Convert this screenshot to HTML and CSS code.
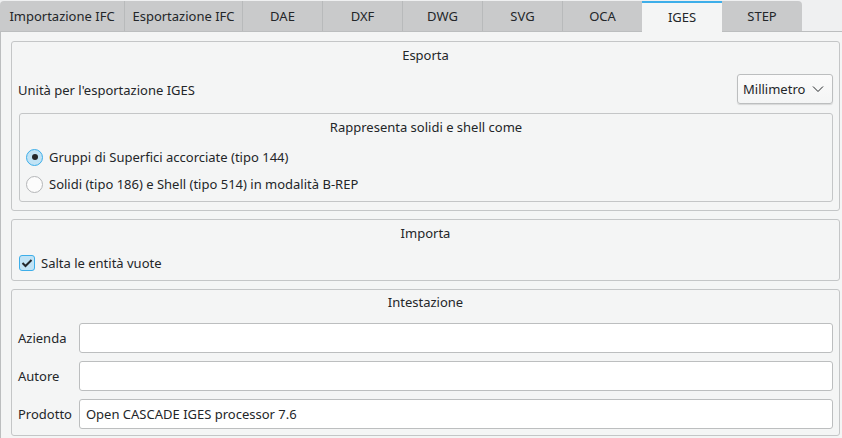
FILE: index.html
```html
<!DOCTYPE html>
<html lang="it">
<head>
<meta charset="utf-8">
<title>IGES</title>
<link rel="stylesheet" href="styles.css">
</head>
<body>
<div class="tabs">
  <div class="tab first w124">Importazione IFC</div>
  <div class="tab w118">Esportazione IFC</div>
  <div class="tab">DAE</div>
  <div class="tab">DXF</div>
  <div class="tab">DWG</div>
  <div class="tab">SVG</div>
  <div class="tab">OCA</div>
  <div class="tab active">IGES</div>
  <div class="tab last">STEP</div>
</div>
<div class="pane">
  <section class="group g-export">
    <div class="title">Esporta</div>
    <div class="unit-row">
      <span>Unità per l'esportazione IGES</span>
      <div class="combo"><span>Millimetro</span>
        <svg class="chev" width="12" height="8" viewBox="0 0 12 8"><polyline points="1,1.5 6,6.5 11,1.5" fill="none" stroke="#232629" stroke-width="1"/></svg>
      </div>
    </div>
    <section class="group inner">
      <div class="title">Rappresenta solidi e shell come</div>
      <div class="opt first-opt"><span class="radio checked"><span class="dot"></span></span>Gruppi di Superfici accorciate (tipo 144)</div>
      <div class="opt"><span class="radio"></span>Solidi (tipo 186) e Shell (tipo 514) in modalità B-REP</div>
    </section>
  </section>
  <section class="group g-import">
    <div class="title">Importa</div>
    <div class="opt check-row"><span class="check"><svg width="12" height="10" viewBox="0 0 12 10"><polyline points="1.5,5 4.5,8 10.5,2" fill="none" stroke="#232629" stroke-width="2"/></svg></span>Salta le entità vuote</div>
  </section>
  <section class="group g-header">
    <div class="title">Intestazione</div>
    <div class="form">
      <label>Azienda</label><div class="input"></div>
      <label>Autore</label><div class="input"></div>
      <label>Prodotto</label><div class="input">Open CASCADE IGES processor 7.6</div>
    </div>
  </section>
</div>
</body>
</html>
```
FILE: styles.css
```css
* { box-sizing: border-box; }
html, body { margin: 0; padding: 0; }
body {
  width: 842px;
  height: 438px;
  overflow: hidden;
  background: #eff0f1;
  font-family: "Noto Sans", "DejaVu Sans", sans-serif;
  font-size: 13px;
  color: #232629;
}
.tabs {
  display: flex;
  height: 31px;
  padding-top: 1px;
  position: relative;
  z-index: 1;
}
.tab {
  width: 80px;
  height: 30px;
  background: #c9cacb;
  border-left: 1px solid #b8babb;
  display: flex;
  align-items: center;
  justify-content: center;
  padding-bottom: 1px;
}
.tab.first { border-left: none; border-top-left-radius: 4px; }
.tab.last { border-top-right-radius: 4px; }
.w124 { width: 124px; }
.w118 { width: 118px; }
.tab.active {
  background: #f4f5f5;
  border-top: 2px solid #3daee9;
  border-left: none;
  height: 31px;
  padding-top: 0;
  padding-bottom: 2px;
}
.tab.active + .tab { border-left: none; }
.pane {
  height: 407px;
  background: #f4f5f5;
  border-top: 1px solid #bcbebf;
  border-left: 1px solid #bcbebf;
  padding: 9px 2px 0 10px;
  display: flex;
  flex-direction: column;
  gap: 8px;
}
.group {
  border: 1px solid #c4c6c7;
  border-radius: 3px;
  background: #f4f5f5;
  padding: 4px 6px 7px 6px;
}
.g-export { padding-bottom: 8px; }
.title {
  text-align: center;
  line-height: 18px;
  height: 18px;
}
.unit-row {
  display: flex;
  align-items: center;
  justify-content: space-between;
  margin-top: 10px;
  padding-left: 0;
  padding-right: 0;
}
.unit-row > span { position: relative; top: 1px; }
.combo {
  width: 96px;
  height: 30px;
  border: 1px solid #bcbebf;
  border-radius: 3px;
  background: linear-gradient(#fbfbfb, #f4f5f5);
  box-shadow: 0 1px 1px rgba(0,0,0,0.12);
  display: flex;
  align-items: center;
  justify-content: space-between;
  padding: 0 8px 0 5px;
}
.chev { display: block; }
.group.inner {
  margin-top: 9px;
  margin-left: 1px;
  padding: 4px 6px 5px 6px;
}
.opt {
  height: 24px;
  display: flex;
  align-items: center;
}
.first-opt { margin-top: 9px; }
.opt + .opt { margin-top: 3px; }
.radio {
  width: 17px;
  height: 17px;
  border-radius: 50%;
  border: 1px solid #b4b6b8;
  background: #fcfcfc;
  margin-right: 6px;
  display: flex;
  align-items: center;
  justify-content: center;
}
.radio.checked {
  border-color: #3daee9;
  background: #c1e3f5;
}
.dot {
  width: 6px;
  height: 6px;
  border-radius: 50%;
  background: #232629;
}
.check-row { margin-top: 9px; padding-left: 1px; }
.check {
  width: 16px;
  height: 16px;
  border: 1px solid #3daee9;
  border-radius: 3px;
  background: #c1e3f5;
  margin-right: 6px;
  display: flex;
  align-items: center;
  justify-content: center;
}
.g-import { padding-top: 4px; padding-bottom: 5px; }
.g-header { padding-top: 3px; padding-bottom: 6px; }
.form {
  margin-top: 12px;
  display: grid;
  grid-template-columns: auto 1fr;
  column-gap: 7px;
  row-gap: 8px;
  align-items: center;
  padding-left: 0;
}
.input {
  height: 30px;
  background: #ffffff;
  border: 1px solid #bcbebf;
  border-radius: 3px;
  display: flex;
  align-items: center;
  padding-left: 6px;
}
```
